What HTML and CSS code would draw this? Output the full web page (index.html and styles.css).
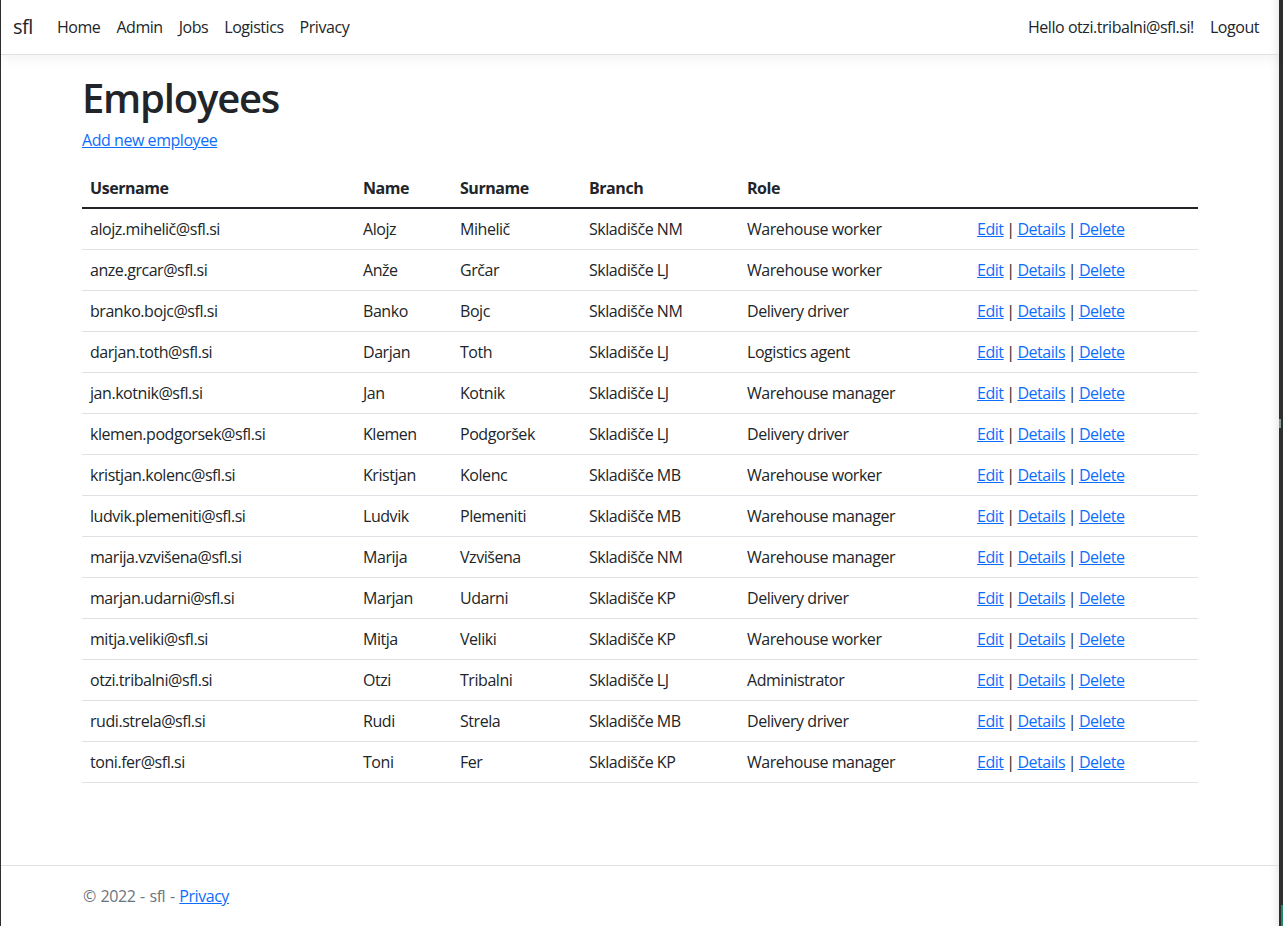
FILE: index.html
```html
<!DOCTYPE html>
<html lang="en">
<head>
<meta charset="utf-8">
<title>Employees - sfl</title>
<link rel="stylesheet" href="styles.css">
</head>
<body>
<div class="window">
  <header class="navbar">
    <div class="nav-inner">
      <a class="brand" href="#">sfl</a>
      <ul class="nav-left">
        <li><a class="nav-link" href="#">Home</a></li>
        <li><a class="nav-link" href="#">Admin</a></li>
        <li><a class="nav-link" href="#">Jobs</a></li>
        <li><a class="nav-link" href="#">Logistics</a></li>
        <li><a class="nav-link" href="#">Privacy</a></li>
      </ul>
      <ul class="nav-right">
        <li><a class="nav-link" href="#">Hello otzi.tribalni@sfl.si!</a></li>
        <li><button class="nav-link btn-link" type="button">Logout</button></li>
      </ul>
    </div>
  </header>

  <main class="container">
    <h1 class="title">Employees</h1>
    <p class="add"><a href="#">Add new employee</a></p>
    <table class="table">
      <colgroup>
        <col class="c-user"><col class="c-name"><col class="c-sur"><col class="c-branch"><col class="c-role"><col class="c-act">
      </colgroup>
      <thead>
        <tr><th>Username</th><th>Name</th><th>Surname</th><th>Branch</th><th>Role</th><th></th></tr>
      </thead>
      <tbody>
        <tr><td>alojz.mihelič@sfl.si</td><td>Alojz</td><td>Mihelič</td><td>Skladišče NM</td><td>Warehouse worker</td><td class="actions"><a href="#">Edit</a> | <a href="#">Details</a> | <a href="#">Delete</a></td></tr>
        <tr><td>anze.grcar@sfl.si</td><td>Anže</td><td>Grčar</td><td>Skladišče LJ</td><td>Warehouse worker</td><td class="actions"><a href="#">Edit</a> | <a href="#">Details</a> | <a href="#">Delete</a></td></tr>
        <tr><td>branko.bojc@sfl.si</td><td>Banko</td><td>Bojc</td><td>Skladišče NM</td><td>Delivery driver</td><td class="actions"><a href="#">Edit</a> | <a href="#">Details</a> | <a href="#">Delete</a></td></tr>
        <tr><td>darjan.toth@sfl.si</td><td>Darjan</td><td>Toth</td><td>Skladišče LJ</td><td>Logistics agent</td><td class="actions"><a href="#">Edit</a> | <a href="#">Details</a> | <a href="#">Delete</a></td></tr>
        <tr><td>jan.kotnik@sfl.si</td><td>Jan</td><td>Kotnik</td><td>Skladišče LJ</td><td>Warehouse manager</td><td class="actions"><a href="#">Edit</a> | <a href="#">Details</a> | <a href="#">Delete</a></td></tr>
        <tr><td>klemen.podgorsek@sfl.si</td><td>Klemen</td><td>Podgoršek</td><td>Skladišče LJ</td><td>Delivery driver</td><td class="actions"><a href="#">Edit</a> | <a href="#">Details</a> | <a href="#">Delete</a></td></tr>
        <tr><td>kristjan.kolenc@sfl.si</td><td>Kristjan</td><td>Kolenc</td><td>Skladišče MB</td><td>Warehouse worker</td><td class="actions"><a href="#">Edit</a> | <a href="#">Details</a> | <a href="#">Delete</a></td></tr>
        <tr><td>ludvik.plemeniti@sfl.si</td><td>Ludvik</td><td>Plemeniti</td><td>Skladišče MB</td><td>Warehouse manager</td><td class="actions"><a href="#">Edit</a> | <a href="#">Details</a> | <a href="#">Delete</a></td></tr>
        <tr><td>marija.vzvišena@sfl.si</td><td>Marija</td><td>Vzvišena</td><td>Skladišče NM</td><td>Warehouse manager</td><td class="actions"><a href="#">Edit</a> | <a href="#">Details</a> | <a href="#">Delete</a></td></tr>
        <tr><td>marjan.udarni@sfl.si</td><td>Marjan</td><td>Udarni</td><td>Skladišče KP</td><td>Delivery driver</td><td class="actions"><a href="#">Edit</a> | <a href="#">Details</a> | <a href="#">Delete</a></td></tr>
        <tr><td>mitja.veliki@sfl.si</td><td>Mitja</td><td>Veliki</td><td>Skladišče KP</td><td>Warehouse worker</td><td class="actions"><a href="#">Edit</a> | <a href="#">Details</a> | <a href="#">Delete</a></td></tr>
        <tr><td>otzi.tribalni@sfl.si</td><td>Otzi</td><td>Tribalni</td><td>Skladišče LJ</td><td>Administrator</td><td class="actions"><a href="#">Edit</a> | <a href="#">Details</a> | <a href="#">Delete</a></td></tr>
        <tr><td>rudi.strela@sfl.si</td><td>Rudi</td><td>Strela</td><td>Skladišče MB</td><td>Delivery driver</td><td class="actions"><a href="#">Edit</a> | <a href="#">Details</a> | <a href="#">Delete</a></td></tr>
        <tr><td>toni.fer@sfl.si</td><td>Toni</td><td>Fer</td><td>Skladišče KP</td><td>Warehouse manager</td><td class="actions"><a href="#">Edit</a> | <a href="#">Details</a> | <a href="#">Delete</a></td></tr>
      </tbody>
    </table>
  </main>

  <footer class="footer">
    <div class="container footer-inner">© 2022 - sfl - <a href="#">Privacy</a></div>
  </footer>

  <div class="edge-mark"></div>
  <div class="edge-green"></div>
</div>
</body>
</html>
```

FILE: styles.css
```css
* { box-sizing: border-box; }

html {
  background: #2e2e2e;
  height: 100%;
}

body {
  margin: 0;
  height: 100%;
  font-family: "Open Sans", "Noto Sans", "Liberation Sans", sans-serif;
  font-size: 16px;
  line-height: 1.5;
  color: #212529;
  letter-spacing: -0.45px;
}

.window {
  position: relative;
  margin-left: 1px;
  width: 1278px;
  min-height: 926px;
  background: #fff;
  box-shadow: inset -10px 0 8px -8px rgba(0, 0, 0, 0.10);
}

a { color: #0d6efd; text-decoration: underline; }

/* navbar */
.navbar {
  height: 55px;
  border-bottom: 1px solid #dee2e6;
  box-shadow: 0 4px 12px rgba(0, 0, 0, 0.05);
  margin-bottom: 16px;
}

.nav-inner {
  height: 54px;
  padding: 0 12px;
  display: flex;
  align-items: center;
}

.brand {
  font-size: 20px;
  line-height: 30px;
  color: #212529;
  text-decoration: none;
  margin-right: 16px;
}

.nav-left, .nav-right {
  list-style: none;
  margin: 0;
  padding: 0;
  display: flex;
}

.nav-left { flex: 1; }

.nav-link {
  display: block;
  padding: 8px;
  color: #212529;
  text-decoration: none;
  font: inherit;
  letter-spacing: inherit;
  line-height: 24px;
}

.btn-link {
  background: none;
  border: 0;
  cursor: pointer;
}

/* content */
.container {
  width: 1140px;
  margin: 0 auto;
  padding: 0 12px;
}

.title {
  margin: 0 0 6px;
  padding-top: 3px;
  font-size: 40px;
  font-weight: 600;
  line-height: 1.2;
  letter-spacing: -1.2px;
}

.add { margin: 0 0 16px; }

.table {
  width: 100%;
  border-collapse: collapse;
  table-layout: fixed;
}

.c-user { width: 273px; }
.c-name { width: 97px; }
.c-sur { width: 129px; }
.c-branch { width: 158px; }
.c-role { width: 230px; }
.c-act { width: 229px; }

.table th,
.table td {
  padding: 8px;
  text-align: left;
  border-bottom: 1px solid #dee2e6;
  white-space: nowrap;
  vertical-align: top;
}

.table th {
  font-weight: 700;
  padding-bottom: 7px;
  border-bottom: 2px solid #212529;
}

.actions { word-spacing: -1px; }

/* footer */
.footer {
  position: absolute;
  left: 0;
  right: 0;
  bottom: 0;
  border-top: 1px solid #dee2e6;
  line-height: 60px;
  color: #6c757d;
  white-space: nowrap;
}

.footer-inner { padding-left: 13px; word-spacing: 1px; }

.edge-mark {
  position: absolute;
  right: -2px;
  top: 419px;
  width: 2px;
  height: 9px;
  background: #8a9a96;
}

.edge-green {
  position: absolute;
  right: -5px;
  top: 905px;
  width: 3px;
  height: 21px;
  background: #1f8a68;
}
```
